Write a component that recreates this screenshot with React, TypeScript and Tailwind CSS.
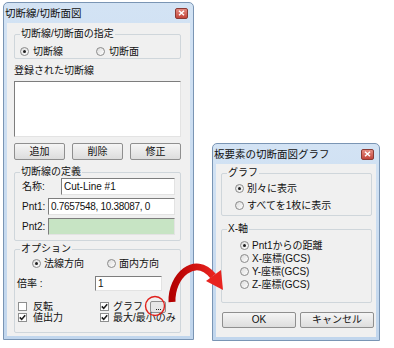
import React from 'react';

const FONT = "font-['Liberation_Sans','Noto_Sans_CJK_JP',sans-serif]";

const Radio: React.FC<{checked?: boolean}> = ({checked}) => (
  <span className="w-[9px] h-[9px] rounded-full border border-[#8a8a8a] bg-linear-to-br from-[#dcdcdc] to-white flex items-center justify-center shrink-0">
    {checked && <span className="w-[3px] h-[3px] rounded-full bg-[#1e1e1e]" />}
  </span>
);

const Check: React.FC<{checked?: boolean}> = ({checked}) => (
  <span className="w-[9px] h-[9px] border border-[#8e8f8f] bg-white flex items-center justify-center shrink-0">
    {checked && (
      <svg width="7" height="7" viewBox="0 0 7 7">
        <path d="M0.8 3.4 L2.7 5.4 L6.2 1.2" stroke="#1e1e1e" strokeWidth="1.6" fill="none" />
      </svg>
    )}
  </span>
);

const Group: React.FC<{label: string; className?: string; children?: React.ReactNode}> = ({
  label,
  className = '',
  children,
}) => (
  <div className={`relative border border-[#cfd6db] rounded-[2px] shrink-0 ${className}`}>
    <span className="absolute -top-[7px] left-[5px] px-[1px] bg-[#f0f0f0] leading-[12px]">{label}</span>
    {children}
  </div>
);

const Btn: React.FC<{className?: string; children?: React.ReactNode}> = ({className = '', children}) => (
  <div
    className={`border border-[#8f8f8f] rounded-[2px] bg-linear-to-b from-[#f5f5f5] to-[#dddddd] flex items-center justify-center leading-none ${className}`}>
    {children}
  </div>
);

const Field: React.FC<{className?: string; children?: React.ReactNode}> = ({className = '', children}) => (
  <div
    className={`border border-t-[#7d7d7d] border-l-[#7d7d7d] border-b-[#e3e3e3] border-r-[#e3e3e3] flex items-center px-[2px] leading-none ${className}`}>
    {children}
  </div>
);

const CloseBtn = () => (
  <span className="w-[13px] h-[11px] rounded-[2px] border border-[#8a3a34] bg-linear-to-b from-[#e48a80] to-[#c2433a] flex items-center justify-center">
    <svg width="7" height="6" viewBox="0 0 7 6">
      <path d="M1 0.8 L6 5.2 M6 0.8 L1 5.2" stroke="white" strokeWidth="1.5" />
    </svg>
  </span>
);

const Window: React.FC<{title: string; className: string; children?: React.ReactNode}> = ({
  title,
  className,
  children,
}) => (
  <div
    className={`absolute border border-[#7a95b4] rounded-t-[5px] bg-linear-to-b from-[#d3e3f4] to-[#c1d6ed] flex flex-col ${className}`}>
    <div className="h-[20px] shrink-0 flex items-center justify-between pl-[1px] pr-[5px]">
      <span className="text-[10.5px] leading-none text-[#111]">{title}</span>
      <CloseBtn />
    </div>
    <div className="flex-1 mx-[3px] mb-[3px] bg-[#f0f0f0] flex flex-col">{children}</div>
  </div>
);

export default function App() {
  return (
    <div className={`relative w-[394px] h-[348px] bg-white overflow-hidden text-[10px] text-[#111] ${FONT}`}>
      {/* main dialog */}
      <Window title="切断線/切断面図" className="left-[3px] top-[2px] w-[191px] h-[338px]">
        <div className="pl-[7px] pr-[9px] pt-[11px] flex flex-col">
          <Group label="切断線/切断面の指定" className="h-[25px]">
            <div className="flex items-center pt-[10px] pl-[5px] h-[22px]">
              <div className="w-[76px] flex items-center gap-[4px]">
                <Radio checked />
                <span>切断線</span>
              </div>
              <div className="flex items-center gap-[4px]">
                <Radio />
                <span>切断面</span>
              </div>
            </div>
          </Group>

          <div className="mt-[6px] h-[12px] leading-[12px]">登録された切断線</div>
          <Field className="mt-[4px] h-[56px] bg-white" />

          <div className="mt-[6px] grid grid-cols-3 gap-[7px]">
            <Btn className="h-[17px]">追加</Btn>
            <Btn className="h-[17px]">削除</Btn>
            <Btn className="h-[17px]">修正</Btn>
          </div>

          <Group label="切断線の定義" className="mt-[12px] h-[69px]">
            <div className="pt-[5px] pl-[7px] pr-[5px] flex flex-col gap-[3px]">
              <div className="flex items-center h-[17px]">
                <span className="w-[39px]">名称:</span>
                <Field className="flex-1 h-[17px] bg-white">Cut-Line #1</Field>
              </div>
              <div className="flex items-center h-[17px]">
                <span className="w-[26px]">Pnt1:</span>
                <Field className="flex-1 h-[17px] bg-white tracking-[-0.3px]">0.7657548, 10.38087, 0</Field>
              </div>
              <div className="flex items-center h-[17px]">
                <span className="w-[26px]">Pnt2:</span>
                <Field className="flex-1 h-[17px] bg-[#c7e4c4]" />
              </div>
            </div>
          </Group>

          <Group label="オプション" className="mt-[8px] h-[84px]">
            <div className="flex items-center pt-[7px] pl-[17px] h-[19px]">
              <div className="w-[75px] flex items-center gap-[3px]">
                <Radio checked />
                <span>法線方向</span>
              </div>
              <div className="flex items-center gap-[3px]">
                <Radio />
                <span>面内方向</span>
              </div>
            </div>
            <div className="mt-[7px] flex items-center h-[15px] pl-[2px]">
              <span className="w-[78px]">倍率 :</span>
              <Field className="w-[67px] h-[15px] bg-white">1</Field>
            </div>
            <div className="mt-[10px] flex items-center h-[11px] pl-[3px]">
              <div className="w-[82px] flex items-center gap-[6px]">
                <Check />
                <span>反転</span>
              </div>
              <div className="flex items-center gap-[4px]">
                <Check checked />
                <span>グラフ</span>
                <div className="ml-[3px] w-[16px] h-[12px] shrink-0 border border-[#8f8f8f] rounded-[2px] bg-[#e6e6e6] flex items-end justify-center gap-[1px] pb-[2px]">
                  <span className="w-[1px] h-[1px] bg-[#222]" />
                  <span className="w-[1px] h-[1px] bg-[#222]" />
                  <span className="w-[1px] h-[1px] bg-[#222]" />
                </div>
              </div>
            </div>
            <div className="flex items-center h-[11px] pl-[3px]">
              <div className="w-[82px] flex items-center gap-[6px]">
                <Check checked />
                <span>値出力</span>
              </div>
              <div className="flex items-center gap-[4px]">
                <Check checked />
                <span>最大/最小のみ</span>
              </div>
            </div>
          </Group>
        </div>
      </Window>

      {/* graph dialog */}
      <Window title="板要素の切断面図グラフ" className="left-[212px] top-[143px] w-[168px] h-[198px]">
        <div className="pl-[5px] pt-[9px] flex flex-col">
          <Group label="グラフ" className="w-[151px] h-[43px]">
            <div className="pt-[8px] pl-[13px] flex flex-col gap-[5px]">
              <div className="flex items-center gap-[3px] h-[12px]">
                <Radio checked />
                <span>別々に表示</span>
              </div>
              <div className="flex items-center gap-[3px] h-[12px]">
                <Radio />
                <span>すべてを1枚に表示</span>
              </div>
            </div>
          </Group>
          <Group label="X-軸" className="mt-[13px] w-[151px] h-[74px]">
            <div className="pt-[9px] pl-[18px] flex flex-col">
              {['Pnt1からの距離', 'X-座標(GCS)', 'Y-座標(GCS)', 'Z-座標(GCS)'].map((t, i) => (
                <div key={t} className="flex items-center gap-[3px] h-[13px]">
                  <Radio checked={i === 0} />
                  <span>{t}</span>
                </div>
              ))}
            </div>
          </Group>
          <div className="mt-[9px] ml-[1px] flex gap-[4px]">
            <Btn className="w-[74px] h-[16px]">OK</Btn>
            <Btn className="w-[74px] h-[16px]">キャンセル</Btn>
          </div>
        </div>
      </Window>

      {/* annotation: circle and arrow */}
      <svg className="absolute inset-0 pointer-events-none" width="394" height="348" viewBox="0 0 394 348">
        <defs>
          <linearGradient id="arrowRed" x1="0" y1="0" x2="1" y2="0">
            <stop offset="0" stopColor="#b30000" />
            <stop offset="1" stopColor="#e8231f" />
          </linearGradient>
        </defs>
        <circle cx="155" cy="306" r="9.5" fill="none" stroke="#e0201c" strokeWidth="1.4" />
        <path d="M172 302 C171 276 195 254 213 276" fill="none" stroke="url(#arrowRed)" strokeWidth="7" />
        <polygon points="223,290 221,270 206,281" fill="#e8231f" />
      </svg>
    </div>
  );
}
